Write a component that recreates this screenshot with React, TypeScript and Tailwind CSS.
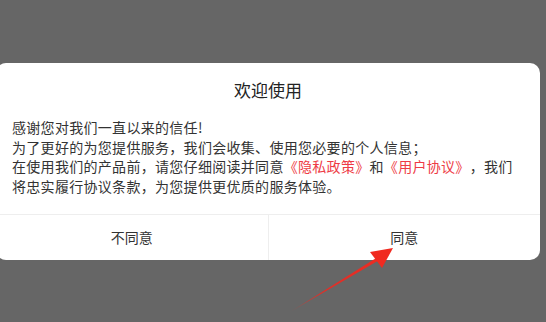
export default function App() {
  return (
    <div
      className="relative w-[546px] h-[322px] overflow-hidden bg-[#666666]"
      style={{ fontFamily: '"Noto Sans CJK SC", "Noto Sans", sans-serif' }}
    >
      <div className="pt-[63px] ml-[-4px]">
        <div className="w-[544px] bg-white rounded-[10px] overflow-hidden">
          <div className="pt-[16px] text-center text-[17px] leading-[22px] text-[#222]">欢迎使用</div>
          <div className="px-[16px] mt-[17px] pb-[17px] text-[14px] leading-[19.7px] text-[#333] tracking-[0.3px] [text-spacing-trim:space-all]">
            <p>感谢您对我们一直以来的信任!</p>
            <p>为了更好的为您提供服务，我们会收集、使用您必要的个人信息；</p>
            <p>
              在使用我们的产品前，请您仔细阅读并同意<span className="text-[#ee3b45]">《隐私政策》</span>和<span className="text-[#ee3b45]">《用户协议》</span>，我们将忠实履行协议条款，为您提供更优质的服务体验。
            </p>
          </div>
          <div className="flex h-[46px] border-t border-[#eeeeee] text-[14px] text-[#333]">
            <div className="flex-1 flex items-center justify-center">不同意</div>
            <div className="w-px bg-[#eeeeee]" />
            <div className="flex-1 flex items-center justify-center">同意</div>
          </div>
        </div>
      </div>
      <svg className="absolute left-0 top-0" width="546" height="322" viewBox="0 0 546 322">
        <defs>
          <linearGradient id="ag" x1="290" y1="312" x2="392" y2="248" gradientUnits="userSpaceOnUse">
            <stop offset="0" stopColor="#e8302a" stopOpacity="0.2" />
            <stop offset="0.3" stopColor="#ea2a22" stopOpacity="0.9" />
            <stop offset="1" stopColor="#f02a20" />
          </linearGradient>
        </defs>
        <polygon points="290,312 377,257.5 378.5,260.5" fill="url(#ag)" />
        <polygon points="393,248 370,252 382,268" fill="#f02a20" />
      </svg>
    </div>
  );
}
